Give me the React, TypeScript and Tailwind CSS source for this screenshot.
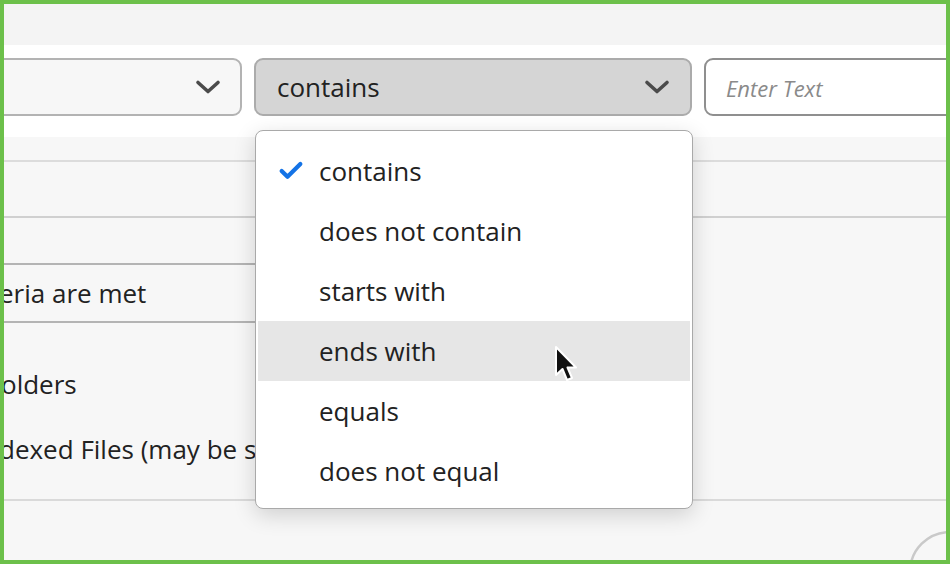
import { Check } from 'lucide-react';

const options = ['contains', 'does not contain', 'starts with', 'ends with', 'equals', 'does not equal'];

function Chevron() {
  return (
    <svg width="26" height="16" viewBox="0 0 26 16" fill="none">
      <path d="M3 3.5 L13 12.5 L23 3.5" stroke="#4b4b4b" strokeWidth="3.6" strokeLinecap="round" strokeLinejoin="round" />
    </svg>
  );
}

function Cursor() {
  return (
    <svg width="28" height="40" viewBox="0 0 28 40">
      <path
        d="M2 2 L2 30 L8.5 24 L13 35 L18 33 L13.5 22.5 L22 22.5 Z"
        fill="#111"
        stroke="#fff"
        strokeWidth="2"
        strokeLinejoin="round"
      />
    </svg>
  );
}

export default function App() {
  const selected = 'contains';
  const hovered = 'ends with';

  return (
    <div className="w-[950px] h-[564px] border-4 border-[#6cc04a] bg-[#f7f7f7] overflow-hidden relative font-['Open_Sans',sans-serif] text-[#222]">
      <div className="h-[41px] bg-[#f4f4f4]" />

      <div className="h-[92px] bg-white flex items-start pt-[13px] gap-[12px]">
        <div className="ml-[-14px] w-[252px] h-[58px] shrink-0 bg-[#f7f7f7] border-2 border-[#b3b3b3] rounded-[9px] flex items-center justify-end pr-[19px]">
          <Chevron />
        </div>
        <div className="w-[438px] h-[58px] shrink-0 bg-[#d5d5d5] border-2 border-[#ababab] rounded-[9px] flex items-center justify-between pl-[21px] pr-[20px]">
          <span className="text-[26px] leading-none">contains</span>
          <Chevron />
        </div>
        <div className="w-[270px] h-[58px] shrink-0 bg-white border-2 border-[#8f8f8f] rounded-[9px] flex items-center pl-[20px]">
          <span className="text-[22px] italic text-[#8a8a8a] pt-[3px]">Enter Text</span>
        </div>
      </div>

      <div className="flex flex-col">
        <div className="h-[25px] border-b-2 border-[#dcdcdc]" />
        <div className="h-[56px] border-b-2 border-[#d0d0d0]" />
        <div className="h-[45px]" />
        <div className="w-[600px] h-[60px] border-y-2 border-[#b4b4b4] flex items-center">
          <span className="text-[26px] ml-[-5px] leading-[34px]">eria are met</span>
        </div>
        <span className="text-[26px] ml-[-3px] leading-[36px] mt-[43px]">olders</span>
        <span className="text-[26px] ml-[-5px] leading-[36px] mt-[29px]">dexed Files (may be s</span>
        <div className="h-[34px] border-b-2 border-[#dadada]" />
      </div>

      <div className="absolute left-[251px] top-[126px] w-[438px] h-[379px] bg-white border-[1.5px] border-[#a9a9a9] rounded-[8px] shadow-[0_6px_22px_rgba(0,0,0,0.16)] pt-[10px]">
        {options.map((o) => (
          <div
            key={o}
            className={`h-[60px] mx-[2px] flex items-center ${o === hovered ? 'bg-[#e6e6e6]' : ''}`}
          >
            <div className="w-[61px] shrink-0 flex justify-center pl-[4px]">
              {o === selected && <Check size={28} strokeWidth={3.6} color="#1473e6" />}
            </div>
            <span className="text-[26px] leading-none">{o}</span>
          </div>
        ))}
      </div>

      <div className="absolute left-[550px] top-[341px]">
        <Cursor />
      </div>

      <svg className="absolute left-[905px] top-[525px]" width="70" height="70" viewBox="0 0 70 70">
        <circle cx="41" cy="43" r="40" fill="none" stroke="#c9c9c9" strokeWidth="2.5" />
      </svg>
    </div>
  );
}
